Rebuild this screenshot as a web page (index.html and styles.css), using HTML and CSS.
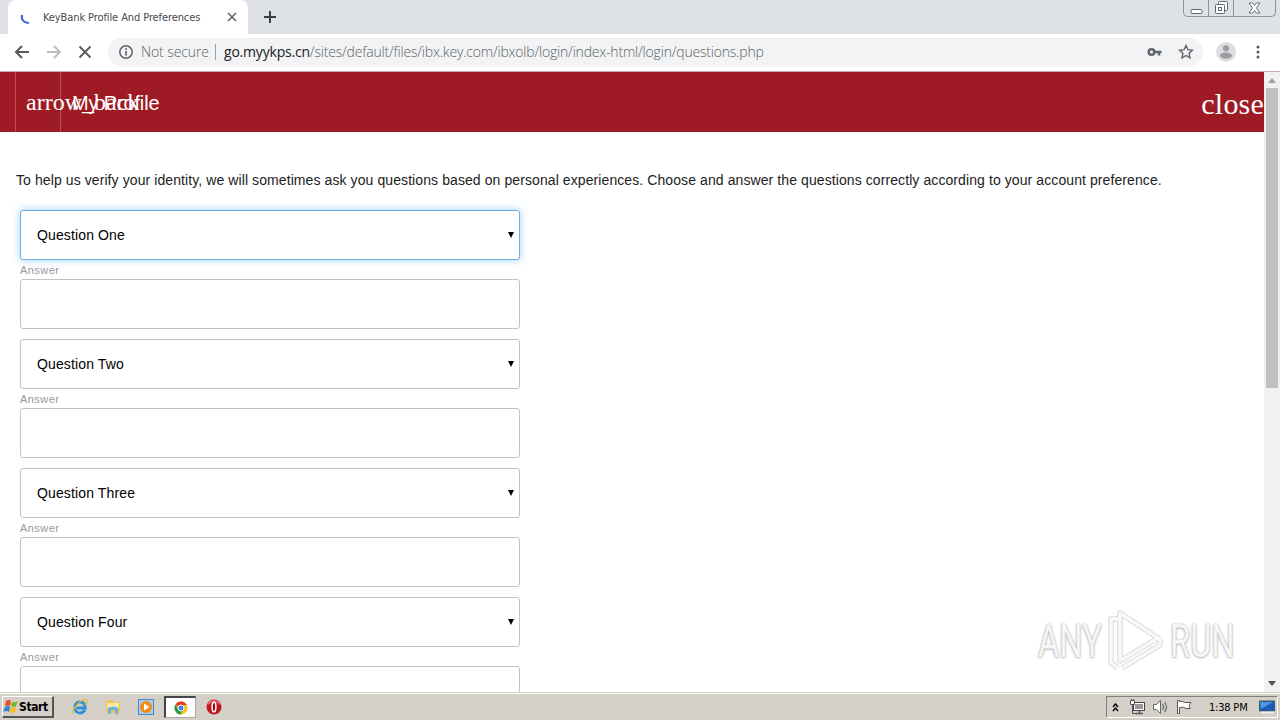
FILE: index.html
```html
<!DOCTYPE html>
<html lang="en">

<head>
    <meta charset="UTF-8">
    <meta name="viewport" content="width=device-width, initial-scale=1.0">
    <title>KeyBank Profile And Preferences</title>
    <link rel="stylesheet" href="styles.css">
</head>

<body>
    <!-- tabs -->
    <div class="tabs">
        <div class="tab">
            <svg class="spinner" width="12" height="12" viewBox="0 0 12 12"><path d="M2 1C1 6 4 9 9 9" fill="none" stroke="#3367d6" stroke-width="2" /></svg>
            <span class="tab-title">KeyBank Profile And Preferences</span>
            <svg width="10" height="10" viewBox="0 0 10 10"><path d="M1 1l8 8M9 1l-8 8" stroke="#5f6368" stroke-width="1.6" /></svg>
        </div>
        <svg class="plus" width="12" height="12" viewBox="0 0 12 12"><path d="M6 0v12M0 6h12" stroke="#3c4043" stroke-width="2" /></svg>
        <div class="winbtns">
            <span><svg width="13" height="14" viewBox="0 0 13 14"><rect x="1" y="8.5" width="11" height="4" rx="1" fill="#fff" stroke="#5f6575" /></svg></span>
            <span><svg width="14" height="14" viewBox="0 0 14 14"><g fill="#fff" stroke="#5f6575"><rect x="4.5" y=".5" width="9" height="9" rx="1" /><rect x="1.5" y="3.5" width="9" height="9" rx="1" /><rect x="4.5" y="6.5" width="3" height="3" /></g></svg></span>
            <span class="x"><svg width="13" height="12" viewBox="0 0 13 12"><path d="M1 1h3.5l2 2.500 2-2.500H12L8.500 6l3.500 5H8.500l-2-2.500-2 2.500H1l3.500-5z" fill="#fff" stroke="#6b7080" /></svg></span>
        </div>
    </div>

    <!-- address bar -->
    <div class="toolbar">
        <svg width="16" height="14" viewBox="0 0 16 14"><path d="M15 7H2M8 1L2 7l6 6" fill="none" stroke="#55585c" stroke-width="2" /></svg>
        <svg width="16" height="14" viewBox="0 0 16 14"><path d="M1 7h13M8 1l6 6-6 6" fill="none" stroke="#babcbe" stroke-width="2" /></svg>
        <svg width="14" height="14" viewBox="0 0 14 14"><path d="M1.500 1.500l11 11M12.500 1.500l-11 11" stroke="#55585c" stroke-width="1.800" /></svg>
        <div class="url">
            <svg width="14" height="14" viewBox="0 0 14 14"><circle cx="7" cy="7" r="6.200" fill="none" stroke="#5f6368" stroke-width="1.500" /><path d="M7 6v4.500M7 3.300v1.600" stroke="#5f6368" stroke-width="1.600" /></svg>
            <span class="notsecure">Not secure</span>
            <span class="sep"></span>
            <span class="address"><b>go.myykps.cn</b>/sites/default/files/ibx.key.com/ibxolb/login/index-html/login/questions.php</span>
            <svg class="key" width="15" height="10" viewBox="0 0 15 10"><circle cx="4.500" cy="5" r="2.800" fill="none" stroke="#5f6368" stroke-width="2.400" /><path d="M7 5h7.500M12 5v3.500" stroke="#5f6368" stroke-width="2.400" /></svg>
            <svg width="16" height="16" viewBox="0 0 16 16"><path d="M8 1.500l1.900 4.200 4.600.5-3.400 3.100.9 4.600L8 11.500l-4 2.400.9-4.600L1.500 6.200l4.600-.5z" fill="none" stroke="#5f6368" stroke-width="1.400" /></svg>
        </div>
        <svg class="avatar" width="20" height="20" viewBox="0 0 20 20"><circle cx="10" cy="10" r="10" fill="#dcdddf" /><circle cx="10" cy="6.300" r="3.100" fill="#9b9da0" /><ellipse cx="10" cy="13.600" rx="6" ry="3.100" fill="#9b9da0" /></svg>
        <svg width="4" height="14" viewBox="0 0 4 14" fill="#55585c"><circle cx="2" cy="2" r="1.500" /><circle cx="2" cy="7" r="1.500" /><circle cx="2" cy="12" r="1.500" /></svg>
    </div>

    <div class="view">
        <div class="page">
            <header>
                <span class="back">arrow_back</span>
                <h1>My Profile</h1>
                <span class="close">close</span>
            </header>
            <p class="intro">To help us verify your identity, we will sometimes ask you questions based on personal experiences. Choose and answer the questions correctly according to your account preference.</p>

            <div class="questions">
                <div class="select active">Question One<i></i></div>
                <label>Answer</label>
                <div class="answer"></div>

                <div class="select">Question Two<i></i></div>
                <label>Answer</label>
                <div class="answer"></div>

                <div class="select">Question Three<i></i></div>
                <label>Answer</label>
                <div class="answer"></div>

                <div class="select">Question Four<i></i></div>
                <label>Answer</label>
                <div class="answer"></div>
            </div>
        </div>
        <div class="scroll">
            <i class="up"></i>
            <div class="thumb"></div>
            <i class="down"></i>
        </div>

        <div class="watermark">
            <span>ANY</span>
            <svg width="58" height="64" viewBox="0 0 58 64">
                <g fill="none" stroke-linejoin="round">
                    <path d="M13 10H4v44l7 5M13 4v48l38-23zM15 59l38-23v-7" stroke="#d9d9d9" stroke-width="5.500" />
                    <path d="M13 10H4v44l7 5M13 4v48l38-23zM15 59l38-23v-7" stroke="#f8f8f8" stroke-width="3.500" />
                </g>
            </svg>
            <span>RUN</span>
        </div>
    </div>

    <!-- taskbar -->
    <footer>
        <div class="start">
            <svg width="16" height="16" viewBox="0 0 16 16"><path d="M3 2q3-2 5 0L7 7q-3-1-5 0z" fill="#e8501f" /><path d="M9 3q3 1 6-1l-2 5q-2 2-5 0z" fill="#77b82a" /><path d="M2 8q3-2 5 0l-1 5q-3-2-6 0z" fill="#2f83d3" /><path d="M8 8q3 2 5 0l-1 5q-3 2-5 0z" fill="#fbbc16" /></svg>
            <b>Start</b>
        </div>
        <div class="apps">
            <svg width="16" height="16" viewBox="0 0 16 16"><path d="M13 11q-2 3-5 3-5 0-5-5.500T8 3q5 0 5.300 6H5" fill="none" stroke="#2592dc" stroke-width="2.800" /><path d="M2 14.500Q-1 13 5 6t9-5q3 1-1 5" fill="none" stroke="#e8b923" stroke-width="1.300" /></svg>
            <svg width="16" height="16" viewBox="0 0 16 16"><path d="M1 3l1-2h5l1 2h7v11H1z" fill="#ebc75a" /><path d="M2 4h12v5H2z" fill="#fbe9a3" /><path d="M3 15V9q5-3 10 0v6h-3v-4H6v4z" fill="#6bb2df" /></svg>
            <svg width="16" height="16" viewBox="0 0 16 16"><rect x=".5" y=".5" width="15" height="15" fill="#a8cdf0" stroke="#4a87c8" /><circle cx="8" cy="8" r="6" fill="#f58a16" /><path d="M6 4.500v7L11.500 8z" fill="#fff" /></svg>
            <div class="current">
                <svg width="14" height="14" viewBox="0 0 14 14"><circle cx="7" cy="7" r="6.500" fill="#fbc116" /><path d="M7 7L1.400 3.700A6.500 6.500 0 0 1 12.800 4H7z" fill="#e33b2e" /><path d="M1.400 3.700A6.500 6.500 0 0 0 6.500 13.500L9 8 4 8z" fill="#269b4b" /><circle cx="7" cy="7" r="3" fill="#4285f4" stroke="#fff" /></svg>
            </div>
            <svg width="16" height="16" viewBox="0 0 16 16"><circle cx="8" cy="8" r="7.500" fill="#c01822" /><path d="M2 5Q8-1 14 5" fill="none" stroke="#e0666a" stroke-width="2" /><ellipse cx="8" cy="8" rx="1.900" ry="4.800" fill="#8d0e16" stroke="#fff" stroke-width="1.500" /></svg>
        </div>
        <div class="tray">
            <svg width="7" height="9" viewBox="0 0 7 9"><path d="M1 4l2.500-3L6 4M1 8l2.500-3L6 8" fill="none" stroke="#000" stroke-width="1.400" /></svg>
            <svg class="net" width="16" height="16" viewBox="0 0 16 16"><rect x="4.500" y="3.500" width="11" height="8" fill="#999" stroke="#444" /><rect x="5.500" y="4.500" width="9" height="6" fill="none" stroke="#fff" /><path d="M7 14.500h7M10.500 12v2" stroke="#555" stroke-width="1.500" /><path d="M1.500 1.500h4v4h-4z" fill="#fff" stroke="#555" /><path d="M2.500 0v2M4.500 0v2M3.500 5.500v9h4" fill="none" stroke="#555" /></svg>
            <svg class="sound" width="17" height="16" viewBox="0 0 17 16"><path d="M1.500 5.500h3l4-4v13l-4-4h-3z" fill="#fff" stroke="#666" /><path d="M10.500 5q2 3 0 6M12.500 3q4 5 0 10" fill="none" stroke="#666" stroke-width="1.200" /></svg>
            <svg class="flag" width="16" height="16" viewBox="0 0 16 16"><path d="M1.500 1.500h2v1q3-1 5 1h6.500l-2 3 1 3h-4q-2-2-6.500-1v6h-2z" fill="#fff" stroke="#555" /></svg>
            <span class="clock">1:38 PM</span>
            <svg width="16" height="14" viewBox="0 0 16 14"><path d="M.5 1h15v10H.5z" fill="#1c5bb5" stroke="#456" /><path d="M1 2h13L2 9z" fill="#4d98e3" /><path d="M2 12.500h13" stroke="#eee" stroke-width="2" /></svg>
        </div>
    </footer>
</body>

</html>
```
FILE: styles.css
```css
* {
    box-sizing: border-box;
}

body {
    margin: 0;
    width: 1280px;
    height: 720px;
    overflow: hidden;
    display: flex;
    flex-direction: column;
    font-family: "Liberation Sans", Arial, sans-serif;
    background-color: white;
}

svg {
    display: block;
    flex-shrink: 0;
}

.tabs {
    height: 34px;
    background-color: #dee1e6;
    display: flex;
    padding-left: 8px;
}

.tab {
    width: 240px;
    background-color: white;
    border-radius: 8px 8px 0 0;
    display: flex;
    align-items: center;
    padding: 0 11px 0 12px;
}

.spinner {
    margin-top: 5px;
}

.tab-title {
    flex: 1;
    margin-left: 11px;
    font-family: "DejaVu Sans Condensed", "DejaVu Sans", sans-serif;
    font-stretch: condensed;
    font-size: 11px;
    letter-spacing: -0.1px;
    color: #45494d;
    white-space: nowrap;
}

.plus {
    margin: 11px 0 0 16px;
}

.winbtns {
    display: flex;
    height: 17px;
    margin-left: auto;
    margin-right: 4px;
    border: 1px solid #8d929d;
    border-top: 0;
    border-radius: 0 0 5px 5px;
}

.winbtns span {
    width: 25px;
    display: flex;
    justify-content: center;
    align-items: center;
    border-right: 1px solid #8d929d;
}

.winbtns .x {
    width: 41px;
    border-right: 0;
}

.toolbar {
    height: 38px;
    display: flex;
    align-items: center;
    padding: 0 20px 2px 14px;
    border-bottom: 1px solid #c9a9a9;
}

.toolbar > svg {
    margin-right: 16px;
}

.url {
    flex: 1;
    height: 28px;
    margin-right: 13px;
    padding: 0 9px 0 11px;
    border-radius: 14px;
    background-color: #f1f3f4;
    display: flex;
    align-items: center;
    font-family: "Open Sans", "Noto Sans", sans-serif;
    font-size: 14px;
    font-weight: 300;
    color: #5f6368;
    white-space: nowrap;
}

.notsecure {
    width: 67px;
    margin-left: 8px;
    letter-spacing: -0.1px;
}

.sep {
    width: 1px;
    height: 16px;
    margin: 0 8px 0 7px;
    background-color: #9aa0a6;
}

.address {
    letter-spacing: -0.2px;
}

.address b {
    font-weight: 400;
    color: #202124;
}

.key {
    margin-left: auto;
    margin-right: 16px;
}

.toolbar > .avatar {
    margin-right: 20px;
}

.toolbar > svg:last-child {
    margin-right: 0;
}

.view {
    position: relative;
    height: 620px;
    display: flex;
    overflow: hidden;
}

.page {
    width: 1264px;
}

header {
    height: 60px;
    display: flex;
    align-items: center;
    padding-left: 15px;
    background-color: #9e1b25;
    color: white;
}

/* the icon name runs out of its box and under the title */
.back {
    width: 46px;
    height: 60px;
    padding-left: 10px;
    line-height: 60px;
    border-left: 1px solid #b94c54;
    border-right: 1px solid #b94c54;
    font-family: "Liberation Serif", "Times New Roman", serif;
    font-size: 24px;
    white-space: nowrap;
}

h1 {
    margin: 2px 0 0 11px;
    font-size: 20px;
    font-weight: normal;
    letter-spacing: -0.15px;
}

.close {
    margin: 3px 0 0 auto;
    font-family: "Liberation Serif", "Times New Roman", serif;
    font-size: 30px;
    letter-spacing: 0.2px;
}

.intro {
    margin: 38px 0 20px 16px;
    font-size: 14px;
    line-height: 20px;
    letter-spacing: 0.09px;
    color: #222;
    white-space: nowrap;
}

.questions {
    width: 500px;
    margin-left: 20px;
}

.select,
.answer {
    height: 50px;
    border: 1px solid #c3c3c3;
    border-radius: 3px;
    background-color: white;
}

.select {
    display: flex;
    align-items: center;
    justify-content: space-between;
    padding: 0 5px 0 16px;
    font-size: 14px;
    letter-spacing: 0.13px;
    color: black;
}

.select i {
    border: 3.5px solid transparent;
    border-top: 6px solid black;
    border-bottom: 0;
}

.active {
    border-color: #66afe9;
    box-shadow: 0 0 8px rgba(102, 175, 233, 0.6);
}

label {
    display: block;
    height: 19px;
    line-height: 20px;
    font-size: 11px;
    letter-spacing: 0.45px;
    color: #999;
}

.answer {
    margin-bottom: 10px;
}

.scroll {
    width: 16px;
    background-color: #f1f1f1;
    display: flex;
    flex-direction: column;
    align-items: center;
}

.scroll i {
    border: 4px solid transparent;
}

.scroll .up {
    margin-top: 2px;
    border-bottom: 5px solid #a3a3a3;
}

.scroll .down {
    margin: auto 0 2px;
    border-top: 5px solid #505050;
}

.thumb {
    width: 12px;
    height: 300px;
    margin-top: 5px;
    background-color: #c1c1c1;
}

.watermark {
    position: absolute;
    left: 1038px;
    top: 537px;
    display: flex;
    align-items: center;
    gap: 5px;
    font-family: Roboto, sans-serif;
    font-size: 46px;
    line-height: 64px;
    color: #f6f6f6;
    text-shadow: 0 0 2px #aaa, 0 1px 3px #bbb;
}

.watermark span {
    width: 64px;
    transform: scaleX(0.71);
    transform-origin: left;
    white-space: nowrap;
}

footer {
    height: 28px;
    display: flex;
    align-items: center;
    background-color: #d4d0c8;
    border-top: 1px solid #d4d0c8;
    box-shadow: inset 0 1px white;
    padding: 1px 2px 0;
}

.start {
    width: 52px;
    height: 22px;
    display: flex;
    align-items: center;
    border: 1px solid white;
    border-right: 2px solid #555;
    border-bottom: 2px solid #555;
    font-family: "DejaVu Sans Condensed", "DejaVu Sans", sans-serif;
    font-stretch: condensed;
    font-size: 12px;
    letter-spacing: -0.4px;
}

.apps {
    display: flex;
    align-items: center;
    gap: 17px;
    margin-left: 18px;
}

.current {
    width: 32px;
    height: 22px;
    margin: 0 -7px 0 -7px;
    display: flex;
    align-items: center;
    justify-content: center;
    background-color: white;
    border: 1px solid #aaa;
    border-top: 2px solid #444;
    border-left: 2px solid #444;
}

.tray {
    width: 172px;
    height: 22px;
    margin-left: auto;
    padding: 0 2px 0 5px;
    display: flex;
    align-items: center;
    border: 1px solid #808080;
    border-right-color: white;
    border-bottom-color: white;
}

.net {
    margin-left: 10px;
}

.sound {
    margin-left: 7px;
}

.flag {
    margin-left: 7px;
}

.clock {
    margin: 0 auto 0 17px;
    font-family: "DejaVu Sans Condensed", "DejaVu Sans", sans-serif;
    font-stretch: condensed;
    font-size: 11px;
    letter-spacing: -0.2px;
    white-space: nowrap;
}
```
